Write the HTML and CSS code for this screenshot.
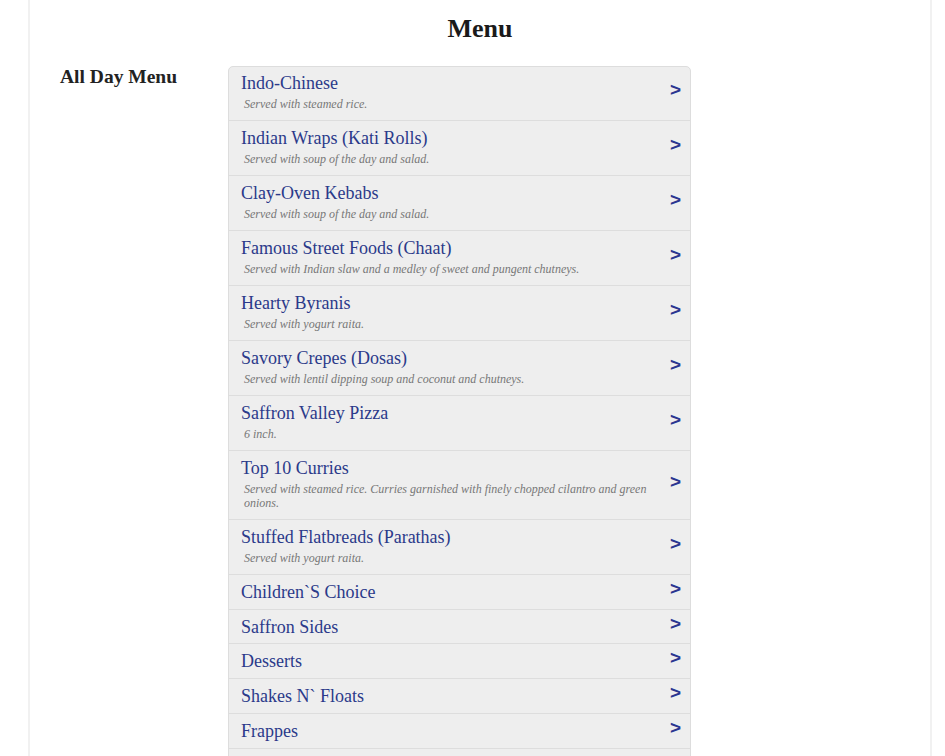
FILE: index.html
```html
<!DOCTYPE html>
<html>
<head>
<meta charset="utf-8">
<link rel="stylesheet" href="styles.css">
</head>
<body>
<div class="page">
  <h1 class="page-title">Menu</h1>
  <div class="menu-layout">
    <h2 class="section-name">All Day Menu</h2>
    <ul class="cat-list">
      <li class="cat"><div class="cat-name">Indo-Chinese</div><div class="cat-desc">Served with steamed rice.</div><span class="cat-arrow">&gt;</span></li>
      <li class="cat"><div class="cat-name">Indian Wraps (Kati Rolls)</div><div class="cat-desc">Served with soup of the day and salad.</div><span class="cat-arrow">&gt;</span></li>
      <li class="cat"><div class="cat-name">Clay-Oven Kebabs</div><div class="cat-desc">Served with soup of the day and salad.</div><span class="cat-arrow">&gt;</span></li>
      <li class="cat"><div class="cat-name">Famous Street Foods (Chaat)</div><div class="cat-desc">Served with Indian slaw and a medley of sweet and pungent chutneys.</div><span class="cat-arrow">&gt;</span></li>
      <li class="cat"><div class="cat-name">Hearty Byranis</div><div class="cat-desc">Served with yogurt raita.</div><span class="cat-arrow">&gt;</span></li>
      <li class="cat"><div class="cat-name">Savory Crepes (Dosas)</div><div class="cat-desc">Served with lentil dipping soup and coconut and chutneys.</div><span class="cat-arrow">&gt;</span></li>
      <li class="cat"><div class="cat-name">Saffron Valley Pizza</div><div class="cat-desc">6 inch.</div><span class="cat-arrow">&gt;</span></li>
      <li class="cat"><div class="cat-name">Top 10 Curries</div><div class="cat-desc">Served with steamed rice. Curries garnished with finely chopped cilantro and green onions.</div><span class="cat-arrow">&gt;</span></li>
      <li class="cat"><div class="cat-name">Stuffed Flatbreads (Parathas)</div><div class="cat-desc">Served with yogurt raita.</div><span class="cat-arrow">&gt;</span></li>
      <li class="cat"><div class="cat-name">Children`S Choice</div><span class="cat-arrow">&gt;</span></li>
      <li class="cat"><div class="cat-name">Saffron Sides</div><span class="cat-arrow">&gt;</span></li>
      <li class="cat"><div class="cat-name">Desserts</div><span class="cat-arrow">&gt;</span></li>
      <li class="cat"><div class="cat-name">Shakes N` Floats</div><span class="cat-arrow">&gt;</span></li>
      <li class="cat"><div class="cat-name">Frappes</div><span class="cat-arrow">&gt;</span></li>
      <li class="cat"><div class="cat-name">Beverages</div><span class="cat-arrow">&gt;</span></li>
    </ul>
  </div>
</div>
</body>
</html>
```

FILE: styles.css
```css
html, body {
  margin: 0;
  padding: 0;
  background: #fff;
}
body {
  font-family: "Liberation Serif", "Times New Roman", serif;
  color: #222;
}
.page {
  margin-left: 28px;
  width: 900px;
  border-left: 2px solid #f1f1f1;
  border-right: 2px solid #f1f1f1;
  min-height: 900px;
}
.page-title {
  margin: 0;
  padding-top: 14px;
  font-size: 26px;
  line-height: 30px;
  font-weight: bold;
  text-align: center;
  color: #1a1a1a;
}
.menu-layout {
  display: flex;
  align-items: flex-start;
  margin-top: 22px;
  padding-left: 30px;
}
.section-name {
  margin: 0;
  width: 168px;
  flex: none;
  font-size: 19.5px;
  line-height: 22px;
  font-weight: bold;
  color: #222;
}
.cat-list {
  list-style: none;
  margin: 0;
  padding: 0;
  width: 461px;
  background: #eee;
  border: 1px solid #ddd;
  border-radius: 5px;
}
.cat {
  position: relative;
  padding: 7px 40px 6px 12px;
  border-top: 1px solid #ddd;
}
.cat:first-child {
  border-top: 0;
  padding-top: 6px;
}
.cat-name {
  font-size: 18px;
  line-height: 20.8px;
  color: #2b3a8a;
}
.cat-desc {
  margin: 3px 0 3.2px 3px;
  font-size: 12px;
  line-height: 14px;
  font-style: italic;
  color: #777;
}
.cat-arrow {
  position: absolute;
  right: 9px;
  top: 50%;
  margin-top: -14px;
  font-family: "Liberation Sans", Arial, sans-serif;
  font-weight: bold;
  font-size: 19px;
  line-height: 22px;
  color: #2b3590;
}
```
